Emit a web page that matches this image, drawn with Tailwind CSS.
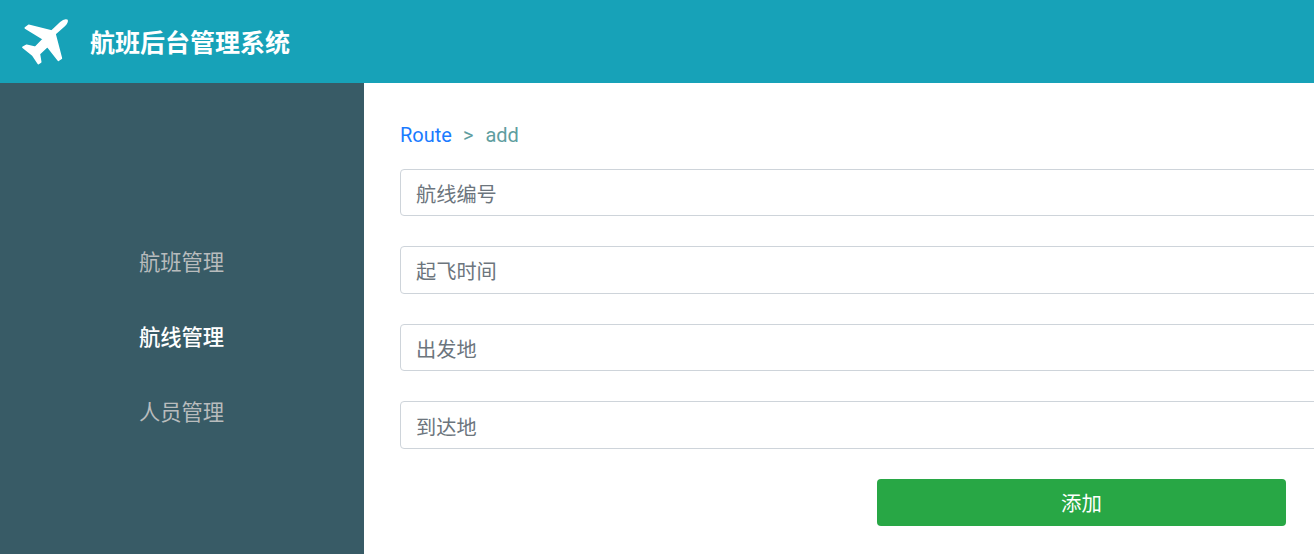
<!DOCTYPE html>
<html lang="zh">
  <head>
    <meta charset="UTF-8" />
    <meta name="viewport" content="width=device-width, initial-scale=1.0" />
    <title>航班后台管理系统</title>
    <script src="https://cdn.jsdelivr.net/npm/@tailwindcss/browser@4"></script>
  </head>
  <body class="h-[554px] overflow-hidden bg-white font-['Noto_Sans','Noto_Sans_CJK_SC',sans-serif]">
    <!-- Header -->
    <header class="flex h-[83px] items-center bg-[#17a2b8] pl-[10px] text-white">
      <svg class="h-[66px] w-[70px] shrink-0" viewBox="0 0 210 198" fill="#fff" stroke="#fff" stroke-width="5" stroke-linejoin="round">
        <path d="M171 34Q163 31 152 41L125 66L56 49L46 57L100 90L76 115L50 109L39 115L68 138L85 164L92 159L88 135L112 112L145 154L154 148L135 75L163 50Q173 40 171 34Z" />
      </svg>
      <h1 class="ml-[10px] pt-[2px] text-[25px] font-bold leading-none">航班后台管理系统</h1>
    </header>

    <div class="flex h-[471px]">
      <!-- Sidebar -->
      <nav class="flex w-[364px] shrink-0 flex-col items-center bg-[#385b66] pt-[141px] pr-[1px] text-[21.3px] text-[#b8bcbd]">
        <a href="#" class="flex h-[75px] w-full items-center justify-center">航班管理</a>
        <a href="#" class="flex h-[75px] w-full items-center justify-center font-medium text-white">航线管理</a>
        <a href="#" class="flex h-[75px] w-full items-center justify-center">人员管理</a>
      </nav>

      <!-- Main -->
      <main class="min-w-0 flex-1 overflow-hidden pl-[36px] pt-[37px]">
        <div class="flex h-[30px] items-center font-['Roboto',sans-serif] text-[20px] leading-none">
          <a href="#" class="text-[#1a7bff]">Route</a>
          <span class="ml-[11px] text-[#5f9ea0]">&gt;</span>
          <span class="ml-[12px] text-[#5f9ea0]">add</span>
        </div>
        <form class="mt-[18.5px] flex w-[1000px] flex-col gap-[30px]">
          <input class="h-[47.5px] rounded border border-[#ced4da] px-[15px] pt-[3px] text-[20.2px] text-[#495057] placeholder:text-[#6c757d]" placeholder="航线编号" />
          <input class="h-[47.5px] rounded border border-[#ced4da] px-[15px] pt-[3px] text-[20.2px] text-[#495057] placeholder:text-[#6c757d]" placeholder="起飞时间" />
          <input class="h-[47.5px] rounded border border-[#ced4da] px-[15px] pt-[3px] text-[20.2px] text-[#495057] placeholder:text-[#6c757d]" placeholder="出发地" />
          <input class="h-[47.5px] rounded border border-[#ced4da] px-[15px] pt-[4px] text-[20.2px] text-[#495057] placeholder:text-[#6c757d]" placeholder="到达地" />
          <button type="button" class="ml-[477px] h-[47px] w-[409px] rounded bg-[#28a745] pt-[2px] text-[20.4px] text-white">添加</button>
        </form>
      </main>
    </div>
  </body>
</html>
